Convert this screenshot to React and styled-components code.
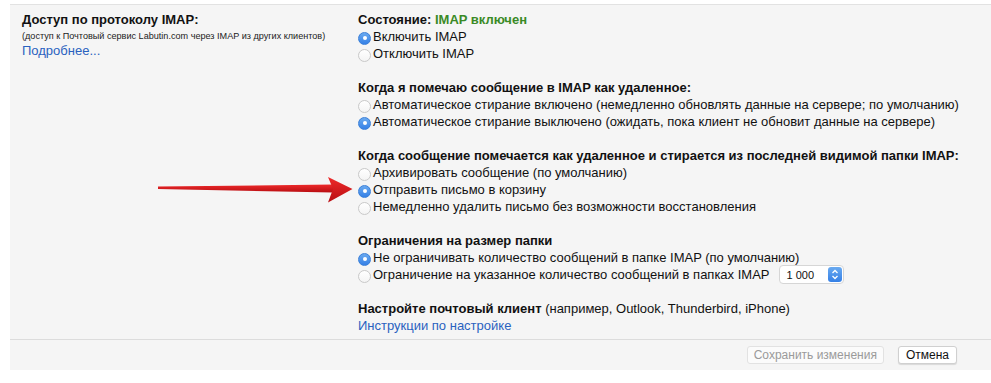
import React, { useState } from 'react';
import styled, { createGlobalStyle } from 'styled-components';

const GlobalStyle = createGlobalStyle`
  body {
    margin: 0;
    background: #ffffff;
    font-family: "Liberation Sans", Arial, sans-serif;
    font-size: 13px;
    color: #111;
  }
`;

const Page = styled.div`
  position: relative;
  width: 991px;
  height: 383px;
  padding-top: 4px;
  box-sizing: border-box;
`;

const Panel = styled.div`
  margin-left: 10px;
  background: #f5f5f5;
  border-top: 1px solid #e2e2e2;
  display: flex;
  flex-direction: column;
`;

const Content = styled.div`
  display: grid;
  grid-template-columns: 348px 1fr;
`;

const LeftCol = styled.div`
  padding: 6px 0 0 12px;
`;

const RightCol = styled.div`
  padding: 6px 0 5px 0;
`;

const Title = styled.div`
  font-weight: bold;
  line-height: 17px;
`;

const Note = styled.div`
  font-size: 9.1px;
  line-height: 12px;
  margin-top: 2px;
  color: #222;
`;

const Link = styled.a`
  display: block;
  color: #2a62c0;
  line-height: 17px;
  text-decoration: none;
  cursor: pointer;
`;

const Section = styled.div`
  margin-bottom: ${p => (p.$last ? 0 : 17)}px;
`;

const Heading = styled.div`
  font-weight: bold;
  line-height: 17px;
`;

const Status = styled.span`
  color: #3a8a26;
`;

const Plain = styled.span`
  font-weight: normal;
`;

const Row = styled.label`
  display: flex;
  align-items: center;
  height: 17px;
  cursor: default;
`;

const Radio = styled.span`
  width: 13px;
  height: 13px;
  border-radius: 50%;
  box-sizing: border-box;
  margin-top: 3px;
  margin-right: 2px;
  flex-shrink: 0;
  display: flex;
  align-items: center;
  justify-content: center;
  background: ${p => (p.$on ? 'linear-gradient(#6aaaf0, #3580e6)' : 'linear-gradient(#ffffff, #f4f4f4)')};
  border: 1px solid ${p => (p.$on ? '#3a7fd8' : '#c9c9c9')};

  &::after {
    content: '';
    width: 4px;
    height: 4px;
    border-radius: 50%;
    background: #fff;
    display: ${p => (p.$on ? 'block' : 'none')};
  }
`;

const Select = styled.div`
  margin-left: 9px;
  width: 65px;
  height: 19px;
  box-sizing: border-box;
  background: #fff;
  border: 1px solid #d6d6d6;
  border-radius: 4px;
  display: flex;
  align-items: center;
  justify-content: space-between;
  padding: 0 1px 0 7px;
  font-size: 11px;
`;

const Stepper = styled.span`
  width: 14px;
  height: 15px;
  border-radius: 3px;
  background: linear-gradient(#6aaaf0, #3580e6);
  display: flex;
  align-items: center;
  justify-content: center;
`;

const Footer = styled.div`
  border-top: 1px solid #dcdcdc;
  display: flex;
  justify-content: flex-end;
  align-items: center;
  gap: 14px;
  height: 30px;
  padding-right: 34px;
`;

const Button = styled.button`
  font-family: "Liberation Sans", Arial, sans-serif;
  font-size: 12px;
  height: 18px;
  padding: 0 ${p => (p.$wide ? 6 : 7)}px;
  border-radius: 3px;
  border: 1px solid ${p => (p.$disabled ? '#e2e2e2' : '#d0d0d0')};
  background: ${p => (p.$disabled ? '#fbfbfb' : '#ffffff')};
  color: ${p => (p.$disabled ? '#9a9a9a' : '#111')};
  box-shadow: ${p => (p.$disabled ? 'none' : '0 1px 1px rgba(0,0,0,0.12)')};
  line-height: 16px;
`;

const Arrow = styled.svg`
  position: absolute;
  left: 150px;
  top: 170px;
  pointer-events: none;
`;

const sections = [
  {
    key: 'state',
    heading: <>Состояние: <Status>IMAP включен</Status></>,
    options: ['Включить IMAP', 'Отключить IMAP'],
    initial: 0,
  },
  {
    key: 'delete',
    heading: 'Когда я помечаю сообщение в IMAP как удаленное:',
    options: [
      'Автоматическое стирание включено (немедленно обновлять данные на сервере; по умолчанию)',
      'Автоматическое стирание выключено (ожидать, пока клиент не обновит данные на сервере)',
    ],
    initial: 1,
  },
  {
    key: 'expunge',
    heading: 'Когда сообщение помечается как удаленное и стирается из последней видимой папки IMAP:',
    options: [
      'Архивировать сообщение (по умолчанию)',
      'Отправить письмо в корзину',
      'Немедленно удалить письмо без возможности восстановления',
    ],
    initial: 1,
  },
  {
    key: 'limit',
    heading: 'Ограничения на размер папки',
    options: [
      'Не ограничивать количество сообщений в папке IMAP (по умолчанию)',
      'Ограничение на указанное количество сообщений в папках IMAP',
    ],
    initial: 0,
    select: 1,
  },
];

const RadioGroup = ({ section }) => {
  const [value, setValue] = useState(section.initial);
  return (
    <Section>
      <Heading>{section.heading}</Heading>
      {section.options.map((text, i) => (
        <Row key={i} onClick={() => setValue(i)}>
          <Radio $on={value === i} />
          {text}
          {section.select === i && (
            <Select>
              1 000
              <Stepper>
                <svg width="8" height="11" viewBox="0 0 8 11">
                  <path d="M1.5 4 L4 1.5 L6.5 4 M1.5 7 L4 9.5 L6.5 7" fill="none" stroke="#fff" strokeWidth="1.3" />
                </svg>
              </Stepper>
            </Select>
          )}
        </Row>
      ))}
    </Section>
  );
};

const App = () => {
  return (
    <Page>
      <GlobalStyle />
      <Panel>
        <Content>
          <LeftCol>
            <Title>Доступ по протоколу IMAP:</Title>
            <Note>(доступ к Почтовый сервис Labutin.com через IMAP из других клиентов)</Note>
            <Link>Подробнее...</Link>
          </LeftCol>
          <RightCol>
            {sections.map(s => (
              <RadioGroup key={s.key} section={s} />
            ))}
            <Section $last>
              <Heading>
                Настройте почтовый клиент <Plain>(например, Outlook, Thunderbird, iPhone)</Plain>
              </Heading>
              <Link>Инструкции по настройке</Link>
            </Section>
          </RightCol>
        </Content>
        <Footer>
          <Button $disabled $wide>Сохранить изменения</Button>
          <Button>Отмена</Button>
        </Footer>
      </Panel>
      <Arrow width="210" height="40" viewBox="150 170 210 40">
        <defs>
          <linearGradient id="arrowShade" x1="0" y1="0" x2="0" y2="1">
            <stop offset="0" stopColor="#ee2a2a" />
            <stop offset="1" stopColor="#b80d12" />
          </linearGradient>
        </defs>
        <path d="M158 186.5 L333 184.5 L333 192.5 L158 189 Z" fill="url(#arrowShade)" />
        <path d="M328 177 L352.5 189 L328 202.5 L333 189 Z" fill="url(#arrowShade)" />
      </Arrow>
    </Page>
  );
};

export default App;
